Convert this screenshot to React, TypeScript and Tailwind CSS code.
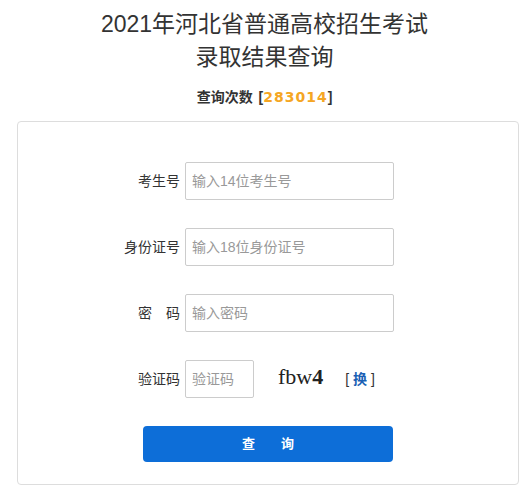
const cn = { fontFamily: '"Liberation Sans", "Noto Sans CJK SC", sans-serif' };

type FieldProps = {
    label: string;
    placeholder: string;
    inputClass?: string;
    children?: React.ReactNode;
};

const Field = ({ label, placeholder, inputClass = 'w-[209px]', children }: FieldProps) => (
    <div className="flex items-center h-[38px]">
        <label className="w-[167px] pr-[5px] text-right text-[14px] text-[#333] whitespace-pre">{label}</label>
        <input
            className={`${inputClass} h-[38px] border border-[#ccc] rounded-[2px] px-[6px] text-[14px] text-[#333] placeholder:text-[#999] outline-none`}
            placeholder={placeholder}
            style={cn}
        />
        {children}
    </div>
);

export default function App() {
    return (
        <div className="w-[529px] min-h-[489px] bg-white" style={cn}>
            <div className="pt-[8px] text-center text-[#333]">
                <h1 className="text-[23px] leading-[33px] font-normal">
                    2021年河北省普通高校招生考试
                    <br />
                    录取结果查询
                </h1>
                <p className="mt-[13px] text-[14px] font-bold leading-[20px]">
                    查询次数 <span className="ml-[2px]">[</span>
                    <span
                        className="text-[#f5a623] tracking-[1px] text-[14px]"
                        style={{ fontFamily: '"DejaVu Sans", sans-serif' }}
                    >
                        283014
                    </span>
                    <span>]</span>
                </p>
            </div>

            <div className="ml-[17px] mt-[14px] w-[502px] border border-[#ddd] rounded-[4px] pt-[40px] pb-[22px]">
                <div className="flex flex-col gap-[28px]">
                    <Field label="考生号" placeholder="输入14位考生号" />
                    <Field label="身份证号" placeholder="输入18位身份证号" />
                    <Field label={'密　码'} placeholder="输入密码" />
                    <Field label="验证码" placeholder="验证码" inputClass="w-[69px]">
                        <span
                            className="ml-[24px] text-[22px] text-[#222] leading-none mt-[-4px]"
                            style={{ fontFamily: '"Liberation Serif", serif' }}
                        >
                            fbw<b>4</b>
                        </span>
                        <span className="ml-[22px] text-[14px] text-[#333] whitespace-pre">
                            {'[ '}
                            <a className="text-[#1a5fb4] font-bold">换</a>
                            {' ]'}
                        </span>
                    </Field>
                </div>
                <button
                    className="mt-[28px] ml-[125px] w-[250px] h-[36px] rounded-[4px] bg-[#0d6ed8] text-white text-[13px] font-bold"
                    style={cn}
                >
                    查　　询
                </button>
            </div>
        </div>
    );
}
